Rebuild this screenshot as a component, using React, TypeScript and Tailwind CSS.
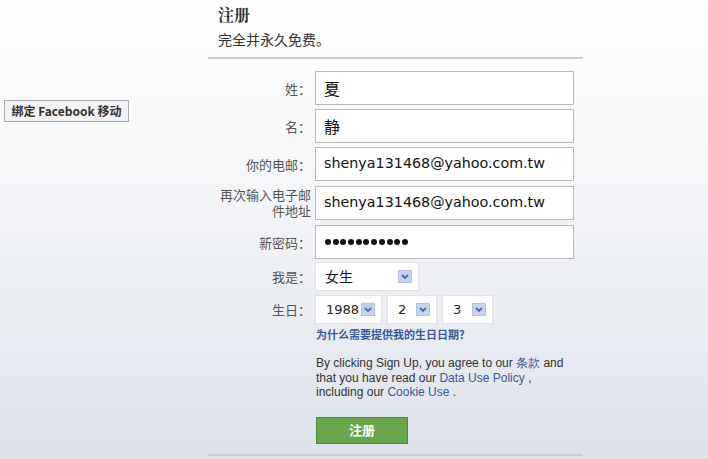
import React, { FC } from "react";

const cjk = "font-['Noto_Sans_CJK_SC','Liberation_Sans',sans-serif]";

const Arrow: FC = () => (
  <span className="flex items-center justify-center w-[14px] h-[13px] bg-[#c5d3ec] border border-[#b3c3e0]">
    <svg width="8" height="6" viewBox="0 0 8 6">
      <path d="M1 1 L4 4 L7 1" fill="none" stroke="#4a6aa5" strokeWidth="1.8" />
    </svg>
  </span>
);

interface RowProps {
  label: React.ReactNode;
  children: React.ReactNode;
  className?: string;
}

const Row: FC<RowProps> = ({ label, children, className }) => (
  <div className={`flex items-center ${className ?? ""}`}>
    <div className={`w-[103px] text-right text-[13px] leading-[15px] text-[#555] ${cjk}`}>{label}</div>
    <div className="ml-[4px]">{children}</div>
  </div>
);

const TextBox: FC<{ children: React.ReactNode }> = ({ children }) => (
  <div className="w-[259px] h-[34px] bg-white border border-[#b9b9b9] flex items-center pl-[8px]">
    {children}
  </div>
);

const Select: FC<{ value: string; w: string }> = ({ value, w }) => (
  <div className={`${w} h-[29px] bg-white border border-[#e2e2e2] flex items-center justify-between pl-[10px] pr-[6px]`}>
    <span className="text-[13px] text-[#222] font-['DejaVu_Sans',sans-serif]">{value}</span>
    <Arrow />
  </div>
);

const Email: FC = () => (
  <span className="text-[14.3px] text-[#111] font-['DejaVu_Sans',sans-serif]">shenya131468@yahoo.com.tw</span>
);

const App: FC = () => {
  return (
    <div className="w-[708px] h-[459px] overflow-hidden bg-gradient-to-b from-[#ffffff] via-[#f1f3f6] to-[#dde1ea] flex">
      <div className="w-[208px] pt-[98px] pl-[4px]">
        <button className={`h-[22px] w-[125px] bg-[#f2f2f2] border border-[#aaa] text-[12px] font-bold text-[#333] ${cjk}`}>
          绑定 Facebook 移动
        </button>
      </div>
      <div className="w-[375px] flex flex-col">
        <div className={`pl-[10px] pt-[4px] pb-[8px] border-b-2 border-[#c9ccd3] ${cjk}`}>
          <h1 className="text-[16px] font-bold leading-[22px] text-[#333] font-['Noto_Serif_CJK_SC','Noto_Sans_CJK_SC',serif]">注册</h1>
          <p className="text-[14px] leading-[20px] text-[#333] mt-[3px]">完全并永久免费。</p>
        </div>
        <div className="flex flex-col mt-[12px]">
          <Row label="姓：">
            <TextBox>
              <span className={`text-[16px] text-[#111] ${cjk}`}>夏</span>
            </TextBox>
          </Row>
          <Row label="名：" className="mt-[4px]">
            <TextBox>
              <span className={`text-[16px] text-[#111] ${cjk}`}>静</span>
            </TextBox>
          </Row>
          <Row label="你的电邮：" className="mt-[4px]">
            <TextBox>
              <Email />
            </TextBox>
          </Row>
          <Row
            label={
              <span className="block leading-[16px]">
                再次输入电子邮
                <br />
                件地址
              </span>
            }
            className="mt-[5px]"
          >
            <TextBox>
              <Email />
            </TextBox>
          </Row>
          <Row label="新密码：" className="mt-[5px]">
            <TextBox>
              <span className="flex gap-[1.7px] pl-[1px]">
                {Array.from({ length: 11 }).map((_, i) => (
                  <span key={i} className="w-[6px] h-[6px] rounded-full bg-[#111]" />
                ))}
              </span>
            </TextBox>
          </Row>
          <Row label="我是：" className="mt-[3px]">
            <div className="w-[104px] h-[29px] bg-white border border-[#e2e2e2] flex items-center justify-between pl-[9px] pr-[6px]">
              <span className={`text-[14px] text-[#111] ${cjk}`}>女生</span>
              <Arrow />
            </div>
          </Row>
          <Row label="生日：" className="mt-[4px]">
            <div className="flex gap-[5px]">
              <Select value="1988" w="w-[67px]" />
              <Select value="2" w="w-[50px]" />
              <Select value="3" w="w-[51px]" />
            </div>
          </Row>
          <div className="pl-[108px] mt-[2px]">
            <a className={`block text-[11px] leading-[16px] font-bold text-[#3b5998] ${cjk}`}>为什么需要提供我的生日日期?</a>
            <div className="mt-[14px] text-[12px] leading-[14.5px] text-[#333] font-['Liberation_Sans',sans-serif]">
              <div>
                <span>By clicking Sign Up, you agree to our </span>
                <a className="text-[#3b5998]">条款</a>
                <span> and</span>
              </div>
              <div>
                <span>that you have read our </span>
                <a className="text-[#3b5998]">Data Use Policy</a>
                <span> ,</span>
              </div>
              <div>
                <span>including our </span>
                <a className="text-[#3b5998]">Cookie Use</a>
                <span> .</span>
              </div>
            </div>
            <button
              className={`mt-[17px] w-[92px] h-[27px] bg-[#69a64d] border border-[#4b8a33] text-white text-[13px] font-bold ${cjk}`}
            >
              注册
            </button>
          </div>
        </div>
        <div className="mt-[10px] border-t-2 border-[#c9ccd3]" />
      </div>
    </div>
  );
};

export default App;
